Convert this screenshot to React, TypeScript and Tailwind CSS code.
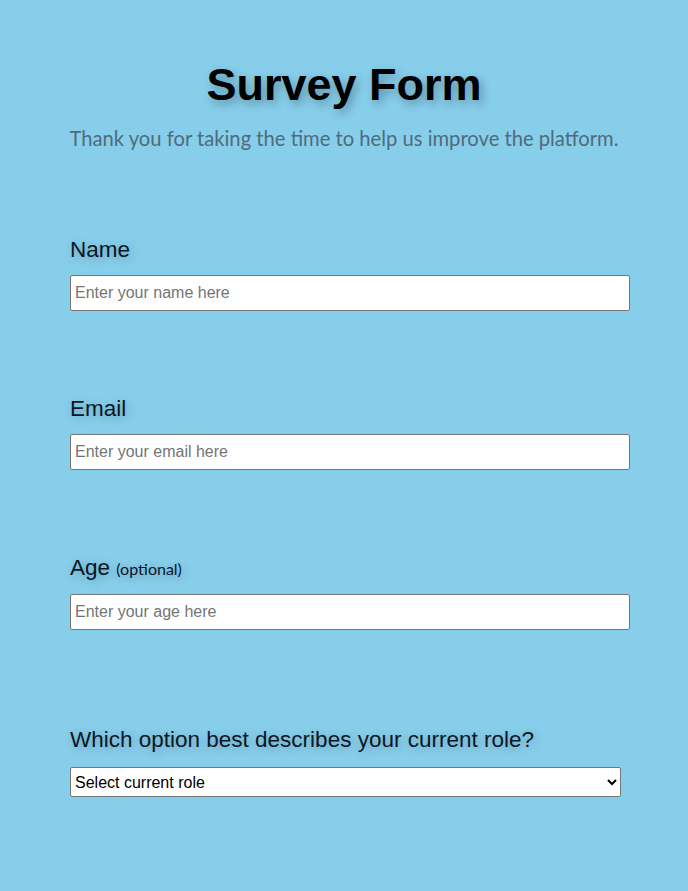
import React from 'react';

const labelCls =
  "block text-[22.5px] leading-[25px] text-[#0b1726] [text-shadow:_2px_2px_10px_rgba(0,0,0,0.25)]";
const inputCls =
  "block w-[560px] h-9 px-1 bg-white border border-[#767676] rounded-[2px] text-[16px] text-black placeholder:text-[#757575] outline-none";

const App = () => {
  return (
    <div
      className="min-h-[891px] w-full bg-[#87ceeb]"
      style={{ fontFamily: '"Liberation Sans", Arial, sans-serif' }}
    >
      <header className="pt-[60px] text-center">
        <h1 className="text-[45px] leading-[50px] font-bold text-black [text-shadow:_3px_4px_10px_rgba(0,0,0,0.3)]">
          Survey Form
        </h1>
        <p className="mt-[16px] text-[20.2px] leading-[24px] text-[#4f6b7d] [font-family:'Comic_Sans_MS','Lato',sans-serif]">
          Thank you for taking the time to help us improve the platform.
        </p>
      </header>

      <form className="px-[70px] pt-[87px]">
        <div>
          <label htmlFor="name" className={labelCls}>
            Name
          </label>
          <input id="name" type="text" placeholder="Enter your name here" className={`${inputCls} mt-[13px]`} />
        </div>

        <div className="mt-[85px]">
          <label htmlFor="email" className={labelCls}>
            Email
          </label>
          <input id="email" type="email" placeholder="Enter your email here" className={`${inputCls} mt-[13px]`} />
        </div>

        <div className="mt-[85px]">
          <label htmlFor="age" className={labelCls}>
            Age{' '}
            <span className="text-[16px] [font-family:'Comic_Sans_MS','Lato',sans-serif]">(optional)</span>
          </label>
          <input id="age" type="number" placeholder="Enter your age here" className={`${inputCls} mt-[13px]`} />
        </div>

        <div className="mt-[97px]">
          <label htmlFor="role" className={labelCls}>
            Which option best describes your current role?
          </label>
          <select
            id="role"
            defaultValue=""
            className="mt-[15px] block w-[551px] h-[30px] pl-0 bg-white border border-[#767676] rounded-[2px] text-[16px] text-black"
          >
            <option value="" disabled>
              Select current role
            </option>
            <option value="student">Student</option>
            <option value="full-time">Full Time Job</option>
            <option value="learner">Full Time Learner</option>
            <option value="other">Other</option>
          </select>
        </div>
      </form>
    </div>
  );
};

export default App;
